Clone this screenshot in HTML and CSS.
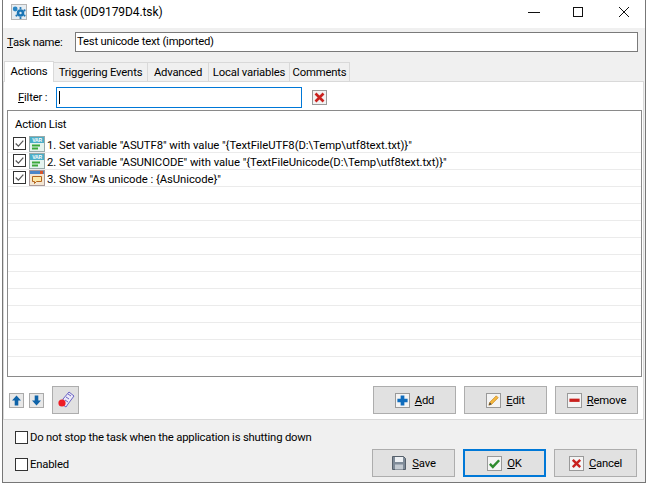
FILE: index.html
```html
<!DOCTYPE html>
<html lang="en">
<head>
<meta charset="utf-8">
<title>Edit task</title>
<link rel="stylesheet" href="styles.css">
</head>
<body>
<div class="window">
  <header class="titlebar">
    <svg class="app-icon" width="16" height="16" viewBox="0 0 16 16"><rect x=".5" y=".5" width="15" height="15" fill="#e6edf2" stroke="#b5b5b5"/><circle cx="9.5" cy="9" r="3.8" fill="#1b75b5"/><circle cx="9.5" cy="9" r="1.2" fill="#d8e8f3"/><circle cx="9.5" cy="4" r="1.1" fill="#1b75b5"/><circle cx="13.5" cy="6.4" r="1.1" fill="#1b75b5"/><circle cx="13.5" cy="11.6" r="1.1" fill="#1b75b5"/><circle cx="9.5" cy="14" r="1.1" fill="#1b75b5"/><circle cx="5.5" cy="11.6" r="1.1" fill="#1b75b5"/><circle cx="4.2" cy="5" r="2.4" fill="#2a86c4"/></svg>
    <span class="title">Edit task (0D9179D4.tsk)</span>
    <div class="caption">
      <svg width="12" height="12" viewBox="0 0 12 12"><path d="M0 6.5h12" stroke="#111" fill="none"/></svg>
      <svg width="12" height="12" viewBox="0 0 12 12"><rect x=".5" y="1.5" width="9" height="9" stroke="#111" fill="none"/></svg>
      <svg width="12" height="12" viewBox="0 0 12 12"><path d="M1 1l10 10M11 1L1 11" stroke="#111" fill="none"/></svg>
    </div>
  </header>
  <div class="name-row">
    <label class="name-label"><u>T</u>ask name:</label>
    <div class="name-input">Test unicode text (imported)</div>
  </div>
  <nav class="tabs">
    <span class="tab active">Actions</span>
    <span class="tab t-trig">Triggering Events</span>
    <span class="tab t-adv">Advanced</span>
    <span class="tab t-local">Local variables</span>
    <span class="tab t-com">Comments</span>
  </nav>
  <section class="panel">
    <div class="filter-row">
      <label class="filter-label"><u>F</u>ilter :</label>
      <div class="filter-input"><span class="caret"></span></div>
      <span class="clear-btn">
        <svg width="13" height="13" viewBox="0 0 13 13"><path d="M2.5 2.5l8 8M10.5 2.5l-8 8" stroke="#c9211e" stroke-width="2.6" fill="none"/></svg>
      </span>
    </div>
    <div class="list">
      <div class="list-head">Action List</div>
      <div class="row">
        <span class="check on"><svg width="13" height="13" viewBox="0 0 13 13"><path d="M2 6.5l3.2 3.2L11 3" stroke="#555" stroke-width="1.4" fill="none"/></svg></span>
        <svg class="ico" width="16" height="16" viewBox="0 0 16 16"><rect x=".5" y=".5" width="15" height="15" fill="#e4f3ef" stroke="#9aa"/><rect x="1" y="1" width="14" height="6" fill="#4aaec8"/><text x="8" y="6.2" class="var-t">VAR</text><path d="M3 9.5h8M3 12.5h6" stroke="#3aa83a" stroke-width="2" fill="none"/></svg>
        <span class="row-text">1. Set variable "ASUTF8" with value "{TextFileUTF8(D:\Temp\utf8text.txt)}"</span>
      </div>
      <div class="row">
        <span class="check on"><svg width="13" height="13" viewBox="0 0 13 13"><path d="M2 6.5l3.2 3.2L11 3" stroke="#555" stroke-width="1.4" fill="none"/></svg></span>
        <svg class="ico" width="16" height="16" viewBox="0 0 16 16"><rect x=".5" y=".5" width="15" height="15" fill="#e4f3ef" stroke="#9aa"/><rect x="1" y="1" width="14" height="6" fill="#4aaec8"/><text x="8" y="6.2" class="var-t">VAR</text><path d="M3 9.5h8M3 12.5h6" stroke="#3aa83a" stroke-width="2" fill="none"/></svg>
        <span class="row-text">2. Set variable "ASUNICODE" with value "{TextFileUnicode(D:\Temp\utf8text.txt)}"</span>
      </div>
      <div class="row">
        <span class="check on"><svg width="13" height="13" viewBox="0 0 13 13"><path d="M2 6.5l3.2 3.2L11 3" stroke="#555" stroke-width="1.4" fill="none"/></svg></span>
        <svg class="ico" width="16" height="16" viewBox="0 0 16 16"><rect x=".5" y=".5" width="15" height="15" fill="#f3e6d3" stroke="#a99"/><rect x="1" y="1" width="14" height="3" fill="#4a86c8"/><rect x="11" y="1" width="3" height="3" fill="#d9552b"/><path d="M3.5 6.5h9v5h-5l-2 2v-2h-2z" fill="#fde9a8" stroke="#b5651d"/></svg>
        <span class="row-text">3. Show "As unicode : {AsUnicode}"</span>
      </div>
      <div class="row"></div><div class="row"></div><div class="row"></div><div class="row"></div>
      <div class="row"></div><div class="row"></div><div class="row"></div><div class="row"></div>
      <div class="row"></div><div class="row"></div>
    </div>
    <div class="actions-row">
      <span class="mini-btn"><svg width="11" height="11" viewBox="0 0 11 11"><path d="M5.5 .5l4.5 5H7.3v5H3.7v-5H1z" fill="#0f63a8"/></svg></span>
      <span class="mini-btn"><svg width="11" height="11" viewBox="0 0 11 11"><path d="M5.5 10.5l4.5-5H7.3v-5H3.7v5H1z" fill="#0f63a8"/></svg></span>
      <span class="record-btn"><svg width="20" height="20" viewBox="0 0 20 20"><path d="M7 9l6-7 5 4-6 8-2 3-3-2z" fill="#eceaf8" stroke="#6a63c4"/><path d="M10 7l3 2M9 10l3 2M12 4l3 2" stroke="#6a63c4" fill="none"/><circle cx="6" cy="13" r="3.6" fill="#ee1c25"/></svg></span>
      <span class="spacer"></span>
      <button class="btn">
        <span class="btn-ico"><svg width="14" height="14" viewBox="0 0 14 14"><path d="M5 1.5h4v3.5h3.500v4H9v3.500H5V9H1.500V5H5z" fill="#0f6cbd"/></svg></span>
        <span><u>A</u>dd</span>
      </button>
      <button class="btn">
        <span class="btn-ico"><svg width="14" height="14" viewBox="0 0 14 14"><path d="M2 12l1-3 7-7 2 2-7 7z" fill="#f4b942" stroke="#c9861a" stroke-width=".8"/><path d="M2 12l1-3 2 2z" fill="#444"/></svg></span>
        <span><u>E</u>dit</span>
      </button>
      <button class="btn">
        <span class="btn-ico"><svg width="14" height="14" viewBox="0 0 14 14"><rect x="1.500" y="5" width="11" height="3.500" fill="#c9211e"/></svg></span>
        <span><u>R</u>emove</span>
      </button>
    </div>
  </section>
  <footer class="footer">
    <div class="stop-row">
      <span class="check"></span>
      <span class="opt">Do not stop the task when the application is shutting down</span>
    </div>
    <div class="bottom-row">
      <span class="check enabled-check"></span>
      <span class="opt enabled-text">Enabled</span>
      <span class="spacer"></span>
      <button class="btn">
        <svg class="save-ico" width="16" height="16" viewBox="0 0 16 16"><path d="M1.5 1.5h11l2 2v11h-13z" fill="#7f8b98" stroke="#56606b"/><rect x="4" y="2" width="8" height="5" fill="#eef1f4"/><rect x="4" y="9.5" width="8" height="5" fill="#c3cad1"/></svg>
        <span><u>S</u>ave</span>
      </button>
      <button class="btn default">
        <span class="btn-ico"><svg width="14" height="14" viewBox="0 0 14 14"><path d="M2 7.5l3.2 3.2L12 3.5" stroke="#2e8b2e" stroke-width="2.6" fill="none"/></svg></span>
        <span><u>O</u>K</span>
      </button>
      <button class="btn">
        <span class="btn-ico"><svg width="14" height="14" viewBox="0 0 14 14"><path d="M3 3l8 8M11 3l-8 8" stroke="#c9211e" stroke-width="2.6" fill="none"/></svg></span>
        <span><u>C</u>ancel</span>
      </button>
    </div>
  </footer>
</div>
</body>
</html>
```

FILE: styles.css
```css
* { box-sizing: border-box; }
html, body { margin: 0; padding: 0; }
body {
  width: 649px;
  height: 484px;
  background: #fff;
  font-family: Roboto, "Open Sans", sans-serif;
  font-size: 11.3px;
  letter-spacing: -0.2px;
  color: #000;
  overflow: hidden;
}
.window {
  margin-left: 2px;
  width: 644px;
  height: 483px;
  background: #f0f0f0;
  border: 1px solid #777;
  border-top: 0;
  display: flex;
  flex-direction: column;
}
.titlebar {
  height: 28px;
  background: #fff;
  display: flex;
  align-items: flex-start;
  padding: 4px 0 0 8px;
}
.app-icon { margin-right: 5px; }
.title { font-size: 12px; letter-spacing: -0.1px; line-height: 16px; }
.caption {
  margin-left: auto;
  display: flex;
  gap: 33px;
  padding: 2px 15px 0 0;
}
.name-row {
  display: flex;
  align-items: center;
  height: 20px;
  margin-top: 4px;
  padding-left: 4px;
  padding-right: 7px;
}
.name-label { width: 68px; }
.name-input {
  flex: 1;
  height: 20px;
  background: #fff;
  border: 1px solid #7a7a7a;
  padding-left: 1px;
  line-height: 18px;
}
.tabs {
  display: flex;
  height: 20px;
  margin-top: 9px;
  padding-left: 1px;
  align-items: flex-end;
}
.tab {
  height: 19px;
  background: #f0f0f0;
  border: 1px solid #d9d9d9;
  border-bottom: 0;
  border-left: 0;
  text-align: center;
  line-height: 20px;
}
.tab.active {
  width: 50px;
  height: 21px;
  background: #fff;
  border-left: 1px solid #d9d9d9;
  margin-bottom: -1px;
  position: relative;
  line-height: 20px;
}
.t-trig { width: 94px; }
.t-adv { width: 61px; }
.t-local { width: 81px; }
.t-com { width: 60px; }
.panel {
  width: 641px;
  height: 339px;
  background: #fff;
  border: 1px solid #d9d9d9;
  display: flex;
  flex-direction: column;
  padding: 5px 3px 0 3px;
}
.filter-row {
  display: flex;
  align-items: center;
  height: 21px;
}
.filter-label { width: 49px; padding-left: 11px; }
.filter-input {
  width: 246px;
  height: 21px;
  border: 1px solid #0078d7;
  padding: 3px 0 0 2px;
}
.caret { display: block; width: 1px; height: 13px; background: #000; }
.clear-btn {
  margin-left: 10px;
  width: 15px;
  height: 15px;
  border: 1px solid #999;
  background: #f2f2f2;
  display: flex;
  align-items: center;
  justify-content: center;
}
.list {
  margin-top: 2px;
  width: 635px;
  height: 267px;
  border: 1px solid #8a8a8a;
  overflow: hidden;
}
.list-head { height: 25px; padding: 6px 0 0 7px; line-height: 16px; }
.row {
  height: 17px;
  display: flex;
  align-items: flex-start;
  border-bottom: 1px solid #ebebeb;
  padding-left: 5px;
}
.check {
  width: 13px;
  height: 13px;
  border: 1px solid #333;
  background: #fff;
  flex: none;
  display: flex;
  align-items: center;
  justify-content: center;
}
.row .check { margin-top: 1px; }
.check svg { width: 11px; height: 11px; }
.ico { margin-left: 3px; margin-right: 2px; flex: none; }
.var-t { font-size: 5px; font-weight: 700; fill: #fff; text-anchor: middle; font-family: "Liberation Sans", sans-serif; }
.row-text { white-space: nowrap; line-height: 17px; padding-top: 1px; letter-spacing: -0.05px; }
.actions-row {
  display: flex;
  align-items: center;
  height: 28px;
  margin-top: 9px;
  padding-left: 2px;
  padding-right: 2px;
}
.mini-btn {
  width: 15px;
  height: 15px;
  margin-right: 5px;
  border: 1px solid #aaa;
  background: #e8e8e8;
  display: flex;
  align-items: center;
  justify-content: center;
}
.record-btn {
  width: 27px;
  height: 28px;
  margin-left: 3px;
  border: 1px solid #adadad;
  background: #e1e1e1;
  display: flex;
  align-items: center;
  justify-content: center;
}
.spacer { flex: 1; }
.btn {
  width: 83px;
  height: 28px;
  margin-left: 8px;
  padding: 0;
  border: 1px solid #adadad;
  background: #e1e1e1;
  font: inherit;
  letter-spacing: inherit;
  color: inherit;
  display: flex;
  align-items: center;
  justify-content: center;
  gap: 5px;
}
.btn.default { border: 2px solid #0078d7; }
.btn-ico {
  width: 15px;
  height: 15px;
  background: #f4f4f4;
  border: 1px solid #999;
  display: flex;
  align-items: center;
  justify-content: center;
}
.btn-ico svg { width: 13px; height: 13px; }
.footer { padding: 0 8px 0 12px; }
.stop-row {
  display: flex;
  align-items: center;
  gap: 2px;
  height: 14px;
  margin-top: 10px;
}
.bottom-row {
  display: flex;
  align-items: center;
  gap: 2px;
  height: 28px;
  margin-top: 5px;
}
.enabled-check { margin-top: 3px; }
.enabled-text { margin-top: 3px; }
.bottom-row .btn { margin-left: 6px; }
```
